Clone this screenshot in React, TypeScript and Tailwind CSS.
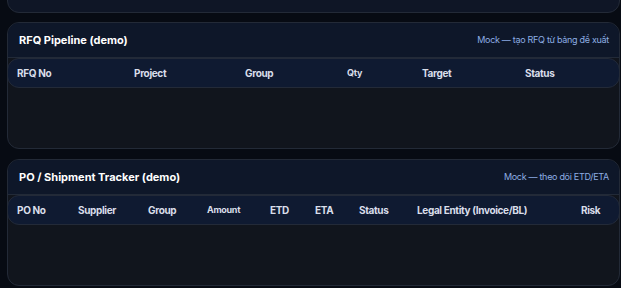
import React from "react";

type Col = { label: string; w: string; small?: boolean };

const rfqCols: Col[] = [
    { label: "RFQ No", w: "w-[117px]" },
    { label: "Project", w: "w-[111px]" },
    { label: "Group", w: "w-[102px]" },
    { label: "Qty", w: "w-[75px]", small: true },
    { label: "Target", w: "w-[103px]" },
    { label: "Status", w: "" },
];

const poCols: Col[] = [
    { label: "PO No", w: "w-[61px]" },
    { label: "Supplier", w: "w-[70px]" },
    { label: "Group", w: "w-[59px]" },
    { label: "Amount", w: "w-[63px]", small: true },
    { label: "ETD", w: "w-[45px]" },
    { label: "ETA", w: "w-[44px]" },
    { label: "Status", w: "w-[58px]" },
    { label: "Legal Entity (Invoice/BL)", w: "w-[164px]" },
    { label: "Risk", w: "" },
];

function DemoTable({ title, note, cols }: { title: string; note: string; cols: Col[] }) {
    return (
        <section className="h-[127px] flex flex-col rounded-xl border border-[#232a37] bg-[#11151d] overflow-hidden">
            <header className="h-[35px] shrink-0 flex items-center justify-between px-[10px] bg-[#0e1729] border-b border-[#222a38]">
                <h2 className="ml-px text-[11px] font-bold text-white">{title}</h2>
                <span className="text-[9px] tracking-[-0.3px] text-[#8daee3]">{note}</span>
            </header>
            <div className="-mx-px rounded-xl border border-[#232a38] bg-[#0f1a31]">
                <table className="w-full border-collapse">
                    <thead>
                        <tr className="h-[28px]">
                            {cols.map((c) => (
                                <th
                                    key={c.label}
                                    className={`${c.w} pl-[9px] text-left font-bold text-[#d9deea] ${c.small ? "text-[9px] tracking-[-0.3px]" : "text-[10px] tracking-[-0.35px]"}`}
                                >
                                    {c.label}
                                </th>
                            ))}
                        </tr>
                    </thead>
                </table>
            </div>
            <div className="flex-1" />
        </section>
    );
}

export default function App() {
    return (
        <div className="h-[288px] overflow-hidden bg-[#070b13] pl-[7px] pr-[1px] font-['Inter',sans-serif]">
            <div className="-mt-[28px] h-[41px] rounded-xl border border-[#232a37] bg-[#0f1626]" />
            <div className="mt-[9px] flex flex-col gap-[10px]">
                <DemoTable title="RFQ Pipeline (demo)" note="Mock — tạo RFQ từ bảng đề xuất" cols={rfqCols} />
                <DemoTable title="PO / Shipment Tracker (demo)" note="Mock — theo dõi ETD/ETA" cols={poCols} />
            </div>
        </div>
    );
}
